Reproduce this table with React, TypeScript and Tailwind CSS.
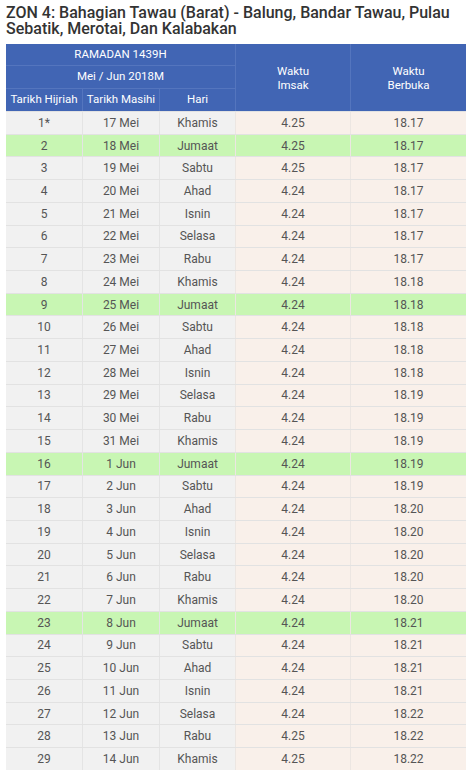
type Row = [string, string, string, string, string];

const rows: Row[] = [
  ["1*", "17 Mei", "Khamis", "4.25", "18.17"],
  ["2", "18 Mei", "Jumaat", "4.25", "18.17"],
  ["3", "19 Mei", "Sabtu", "4.25", "18.17"],
  ["4", "20 Mei", "Ahad", "4.24", "18.17"],
  ["5", "21 Mei", "Isnin", "4.24", "18.17"],
  ["6", "22 Mei", "Selasa", "4.24", "18.17"],
  ["7", "23 Mei", "Rabu", "4.24", "18.17"],
  ["8", "24 Mei", "Khamis", "4.24", "18.18"],
  ["9", "25 Mei", "Jumaat", "4.24", "18.18"],
  ["10", "26 Mei", "Sabtu", "4.24", "18.18"],
  ["11", "27 Mei", "Ahad", "4.24", "18.18"],
  ["12", "28 Mei", "Isnin", "4.24", "18.18"],
  ["13", "29 Mei", "Selasa", "4.24", "18.19"],
  ["14", "30 Mei", "Rabu", "4.24", "18.19"],
  ["15", "31 Mei", "Khamis", "4.24", "18.19"],
  ["16", "1 Jun", "Jumaat", "4.24", "18.19"],
  ["17", "2 Jun", "Sabtu", "4.24", "18.19"],
  ["18", "3 Jun", "Ahad", "4.24", "18.20"],
  ["19", "4 Jun", "Isnin", "4.24", "18.20"],
  ["20", "5 Jun", "Selasa", "4.24", "18.20"],
  ["21", "6 Jun", "Rabu", "4.24", "18.20"],
  ["22", "7 Jun", "Khamis", "4.24", "18.20"],
  ["23", "8 Jun", "Jumaat", "4.24", "18.21"],
  ["24", "9 Jun", "Sabtu", "4.24", "18.21"],
  ["25", "10 Jun", "Ahad", "4.24", "18.21"],
  ["26", "11 Jun", "Isnin", "4.24", "18.21"],
  ["27", "12 Jun", "Selasa", "4.24", "18.22"],
  ["28", "13 Jun", "Rabu", "4.25", "18.22"],
  ["29", "14 Jun", "Khamis", "4.25", "18.22"],
];

const TableRow = ({ row }: { row: Row }) => {
  const friday = row[2] === "Jumaat";
  const left = friday ? "bg-[#c8f6b3]" : "bg-[#f1f1f1]";
  const right = friday ? "bg-[#c8f6b3]" : "bg-[#f9f0ea]";
  return (
    <div className="grid grid-cols-[77px_77px_76px_115px_115px] h-[22.72px] border-t border-[#e2e2e2]">
      <div className={`${left} flex items-center justify-center border-r border-[#e4e4e4]`}>{row[0]}</div>
      <div className={`${left} flex items-center justify-center border-r border-[#e4e4e4]`}>{row[1]}</div>
      <div className={`${left} flex items-center justify-center border-r border-[#ece6e2]`}>{row[2]}</div>
      <div className={`${right} flex items-center justify-center border-r border-[#ece6e2]`}>{row[3]}</div>
      <div className={`${right} flex items-center justify-center`}>{row[4]}</div>
    </div>
  );
};

export default function App() {
  return (
    <div className="w-[474px] h-[776px] bg-white px-[6px] pt-[5px] font-['Roboto',sans-serif] overflow-hidden">
      <h1 className="text-[16px] leading-[16px] font-medium text-[#333]">
        ZON 4: Bahagian Tawau (Barat) - Balung, Bandar Tawau, Pulau Sebatik, Merotai, Dan Kalabakan
      </h1>

      <div className="mt-[7px] w-[460px]">
        {/* Header */}
        <div className="grid grid-cols-[77px_77px_76px_115px_115px] grid-rows-[22px_23px_22px] bg-[#4165b4] text-white text-[11.5px]">
          <div className="col-span-3 flex items-center justify-center border-b border-r border-[#5475be]">RAMADAN 1439H</div>
          <div className="row-span-3 flex items-center justify-center text-center leading-[14px] border-r border-[#5475be]">
            Waktu<br />Imsak
          </div>
          <div className="row-span-3 flex items-center justify-center text-center leading-[14px]">
            Waktu<br />Berbuka
          </div>
          <div className="col-span-3 flex items-center justify-center border-b border-r border-[#5475be]">Mei / Jun 2018M</div>
          <div className="flex items-center justify-center border-r border-[#5475be]">Tarikh Hijriah</div>
          <div className="flex items-center justify-center border-r border-[#5475be]">Tarikh Masihi</div>
          <div className="flex items-center justify-center border-r border-[#5475be]">Hari</div>
        </div>

        {/* Body */}
        <div className="text-[12px] text-[#555]">
          {rows.map((r) => (
            <TableRow key={r[0]} row={r} />
          ))}
        </div>
      </div>
    </div>
  );
}
